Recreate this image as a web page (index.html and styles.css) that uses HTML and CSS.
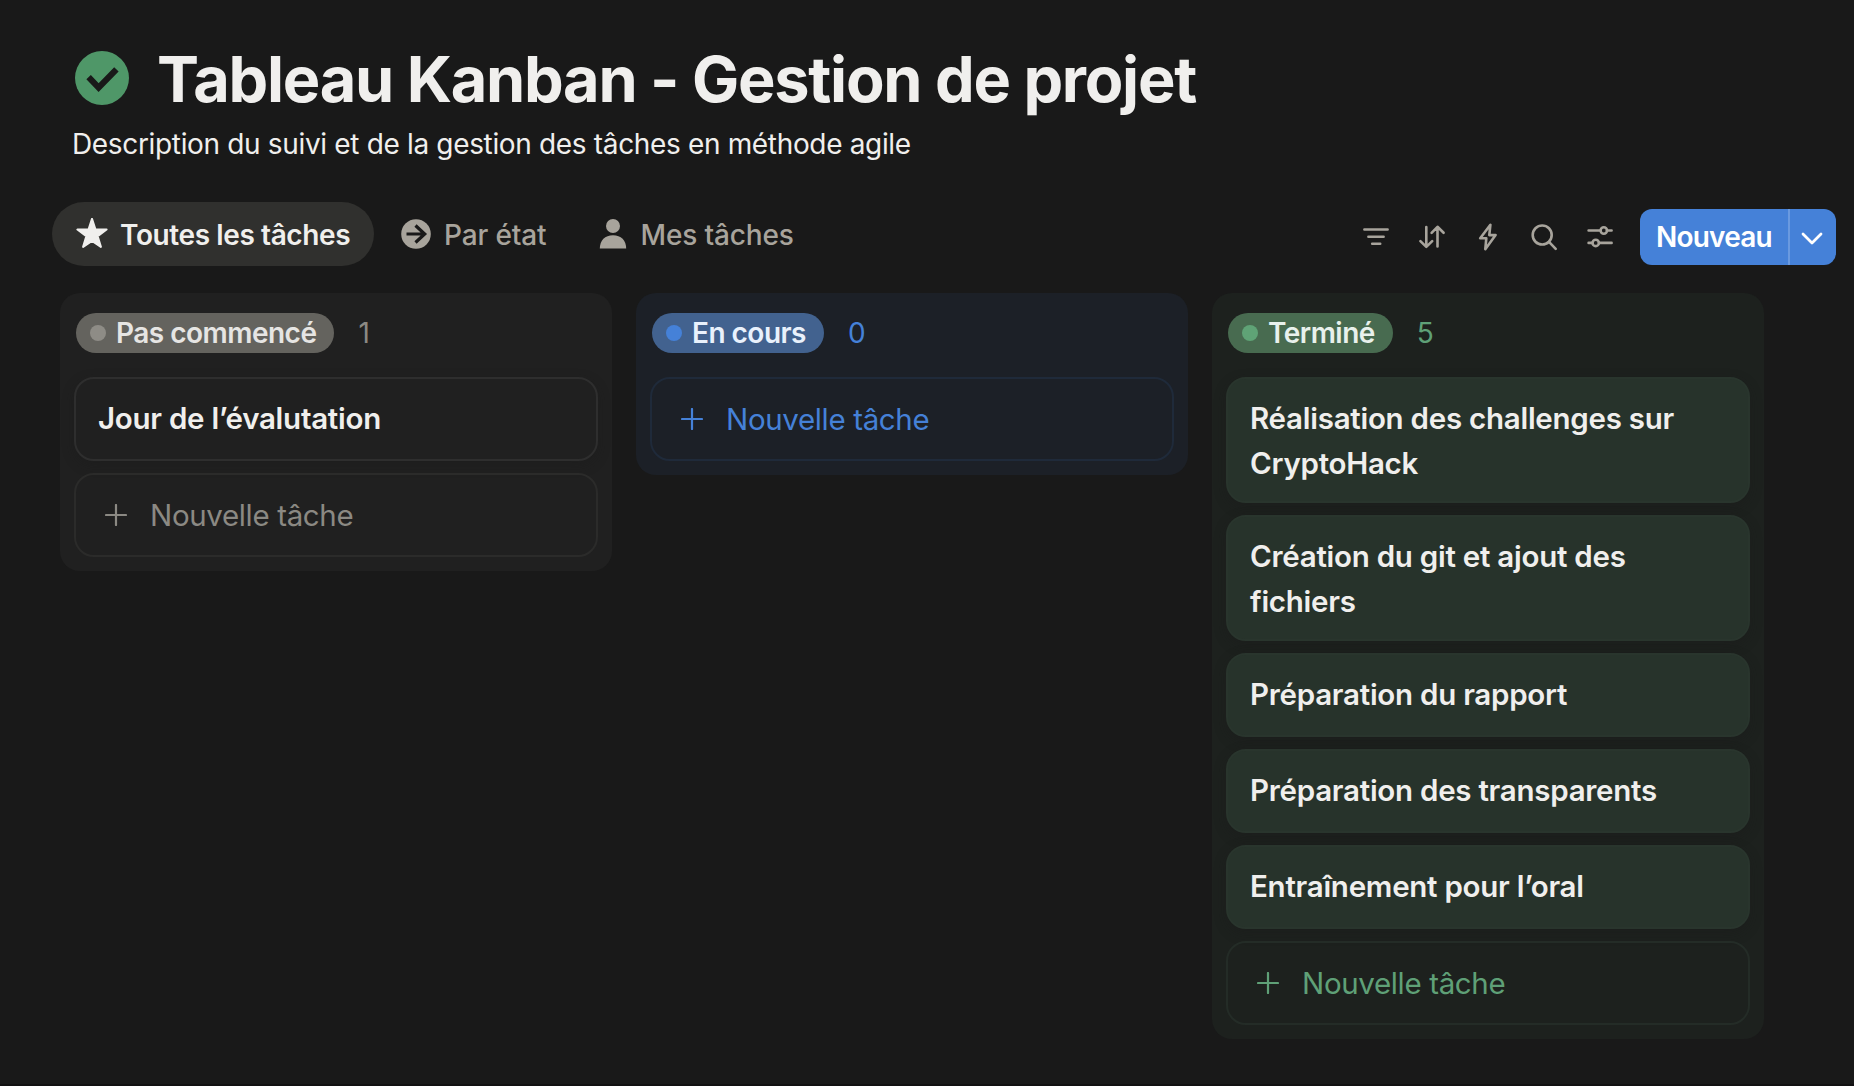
FILE: index.html
```html
<!DOCTYPE html>
<html lang="fr">
<head>
<meta charset="utf-8">
<title>Tableau Kanban - Gestion de projet</title>
<link rel="stylesheet" href="styles.css">
</head>
<body>
<main class="page">
  <header class="header">
    <div class="title-row">
      <svg class="title-icon" viewBox="0 0 54 54"><circle cx="27" cy="27" r="27" fill="#4f9768"/><path d="M13.6 26.2 23.6 36.6 41.4 18.4" fill="none" stroke="#191919" stroke-width="6.2"/></svg>
      <h1 class="title">Tableau Kanban - Gestion de projet</h1>
    </div>
    <p class="description">Description du suivi et de la gestion des tâches en méthode agile</p>
  </header>

  <div class="toolbar">
    <nav class="tabs">
      <a class="tab tab-active">
        <svg class="tab-icon" viewBox="0 0 32 32"><path d="M16 .8 19.4 11.2 30.6 11.5 21.7 18.2 24.9 28.9 16 22.9 7.1 28.9 10.3 18.2 1.4 11.5 12.6 11.2Z" fill="currentColor" stroke="currentColor" stroke-width="2" stroke-linejoin="round"/></svg>
        <span>Toutes les tâches</span>
      </a>
      <a class="tab">
        <svg class="tab-icon" viewBox="0 0 32 32"><circle cx="16" cy="16" r="14.8" fill="currentColor"/><path d="M6.5 16H25M15.5 7.5 24.7 16 15.5 24.5" fill="none" stroke="#191919" stroke-width="3.2"/></svg>
        <span>Par état</span>
      </a>
      <a class="tab">
        <svg class="tab-icon" viewBox="0 0 32 32"><circle cx="16" cy="8" r="7" fill="currentColor"/><path d="M2.8 30.6C2.8 22.4 8 17.3 16 17.3S29.2 22.4 29.2 30.6Z" fill="currentColor"/></svg>
        <span>Mes tâches</span>
      </a>
    </nav>
    <div class="actions">
      <svg class="action" viewBox="0 0 32 32"><path d="M4.4 8.5H27.6M8.4 15.7H23.6M12.2 22.8H20.2"/></svg>
      <svg class="action" viewBox="0 0 32 32"><path d="M10.3 6V25.5M4.4 20.1 10.3 25.9 16.2 20.1M21.5 25.5V6M15.6 11.8 21.5 5.8 27.6 11.8"/></svg>
      <svg class="action" viewBox="0 0 32 32"><path d="M18.4 3.7 8.2 17.3H14.3L13.3 28.2 23.6 14.1H17.3Z"/></svg>
      <svg class="action" viewBox="0 0 32 32"><circle cx="14.2" cy="14" r="9.5"/><path d="M21 20.9 27.7 27.8"/></svg>
      <svg class="action" viewBox="0 0 32 32"><path d="M4.6 9.5H16.6M23 9.5H27.6M4.6 21.9H8.4M15 21.9H27.6"/><circle cx="19.8" cy="9.5" r="3.2"/><circle cx="11.7" cy="21.9" r="3.2"/></svg>
      <div class="new-button">
        <div class="new-label">Nouveau</div>
        <div class="new-more"><svg class="chevron" viewBox="0 0 22 14"><path d="M2 2 11 11 20 2"/></svg></div>
      </div>
    </div>
  </div>

  <section class="board">
    <div class="column column-gray">
      <div class="column-head"><div class="status"><i class="dot"></i><span>Pas commencé</span></div><span class="count">1</span></div>
      <div class="card">Jour de l’évalutation</div>
      <div class="card card-new"><svg class="plus" viewBox="0 0 22 22"><path d="M1 11H21M11 1V21"/></svg><span>Nouvelle tâche</span></div>
    </div>
    <div class="column column-blue">
      <div class="column-head"><div class="status"><i class="dot"></i><span>En cours</span></div><span class="count">0</span></div>
      <div class="card card-new"><svg class="plus" viewBox="0 0 22 22"><path d="M1 11H21M11 1V21"/></svg><span>Nouvelle tâche</span></div>
    </div>
    <div class="column column-green">
      <div class="column-head"><div class="status"><i class="dot"></i><span>Terminé</span></div><span class="count">5</span></div>
      <div class="card">Réalisation des challenges sur<br>CryptoHack</div>
      <div class="card">Création du git et ajout des<br>fichiers</div>
      <div class="card">Préparation du rapport</div>
      <div class="card">Préparation des transparents</div>
      <div class="card">Entraînement pour l’oral</div>
      <div class="card card-new"><svg class="plus" viewBox="0 0 22 22"><path d="M1 11H21M11 1V21"/></svg><span>Nouvelle tâche</span></div>
    </div>
  </section>
</main>
</body>
</html>
```
FILE: styles.css
```css
* { box-sizing: border-box; }

body {
  margin: 0;
  height: 1086px;
  overflow: hidden;
  background: #191919;
  color: #f0efed;
  font-family: Inter, "Liberation Sans", sans-serif;
  border-bottom: 2px solid #121112;
}

.page { padding-top: 39px; }

.header { padding-left: 72px; }

.title-row {
  display: flex;
  align-items: center;
  gap: 28px;
  height: 80px;
  padding-left: 3px;
}

.title-icon { width: 54px; height: 54px; margin-top: -2px; }

.title {
  margin: 0;
  font-size: 63px;
  line-height: 80px;
  font-weight: 700;
  letter-spacing: -1.25px;
  white-space: nowrap;
}

.description {
  margin: 5px 0 0;
  font-size: 28px;
  line-height: 40px;
  letter-spacing: -0.34px;
}

.toolbar {
  display: flex;
  justify-content: space-between;
  align-items: flex-start;
  margin-top: 38px;
  padding: 0 18px 0 52px;
  height: 91px;
}

.tabs { display: flex; gap: 2px; }

.tab {
  display: flex;
  align-items: center;
  gap: 12px;
  height: 64px;
  padding: 0 24px;
  border-radius: 32px;
  color: #a8a49c;
  font-size: 28px;
  font-weight: 500;
  letter-spacing: -0.15px;
  white-space: nowrap;
}

.tab span { padding-top: 2px; }

.tab-active { background: #30302e; color: #f0efed; font-weight: 600; letter-spacing: -0.4px; }

.tab-icon { width: 32px; height: 32px; }

.actions { display: flex; align-items: center; gap: 24px; margin-top: 7px; height: 56px; }

.action {
  width: 32px;
  height: 32px;
  fill: none;
  stroke: #a8a49c;
  stroke-width: 2.6;
  stroke-linecap: round;
  stroke-linejoin: round;
}

.new-button {
  display: flex;
  height: 56px;
  border-radius: 12px;
  overflow: hidden;
  background: #4581d8;
  color: #fff;
}

.new-label {
  display: flex;
  align-items: center;
  width: 150px;
  padding-left: 16px;
  border-right: 2px solid #6a9ae0;
  font-size: 28px;
  font-weight: 600;
  letter-spacing: -0.8px;
}

.new-more { display: flex; align-items: center; padding: 4px 13px 0 11px; width: 46px; }

.chevron { width: 22px; height: 14px; fill: none; stroke: #fff; stroke-width: 2.8; stroke-linecap: round; stroke-linejoin: round; }

.board { display: flex; align-items: flex-start; gap: 24px; padding-left: 60px; }

.column {
  display: flex;
  flex-direction: column;
  gap: 12px;
  width: 552px;
  padding: 20px 14px 14px;
  border-radius: 20px;
}

.column-head { display: flex; align-items: center; height: 40px; margin-bottom: 12px; padding-left: 2px; gap: 24px; }

.status {
  display: flex;
  align-items: center;
  gap: 10px;
  height: 40px;
  padding: 0 18px 0 14px;
  border-radius: 20px;
  font-size: 28px;
  font-weight: 600;
  letter-spacing: -0.52px;
}

.dot { width: 16px; height: 16px; border-radius: 50%; }

.count { font-size: 28px; }

.card {
  min-height: 84px;
  border: 2px solid;
  border-radius: 20px;
  padding: 17px 22px 15px;
  font-size: 29.5px;
  line-height: 45px;
  font-weight: 600;
  letter-spacing: -0.26px;
  white-space: nowrap;
  box-shadow: 0 4px 12px rgba(25, 25, 25, 0.35);
}

.card-new {
  display: flex;
  align-items: center;
  gap: 23px;
  padding: 16px 22px 16px 29px;
  font-weight: 400;
  letter-spacing: -0.35px;
  box-shadow: none;
}

.plus { width: 22px; height: 22px; fill: none; stroke: currentColor; stroke-width: 2.2; stroke-linecap: round; }

.column-gray { background: #202020; }
.column-gray .status { background: #64635e; color: #e6e5e3; }
.column-gray .dot { background: #8e8c86; }
.column-gray .count { color: #8b8983; }
.column-gray .card { border-color: #2e2e2e; }
.column-gray .card-new { border-color: #2b2b2a; color: #8b8983; }

.column-blue { background: #1c2027; }
.column-blue .status { background: #42628f; color: #e9f1fc; }
.column-blue .dot { background: #4581d8; }
.column-blue .count { color: #4581d8; }
.column-blue .card-new { border-color: #1f2a3a; color: #4581d8; }

.column-green { background: #1d211e; }
.column-green .status { background: #486b50; color: #e8f1ec; }
.column-green .dot { background: #5fa376; }
.column-green .count { color: #5fa077; }
.column-green .card { background: #27332b; border-color: #29352d; }
.column-green .card-new { background: none; border-color: #242c27; color: #5fa077; }
```
